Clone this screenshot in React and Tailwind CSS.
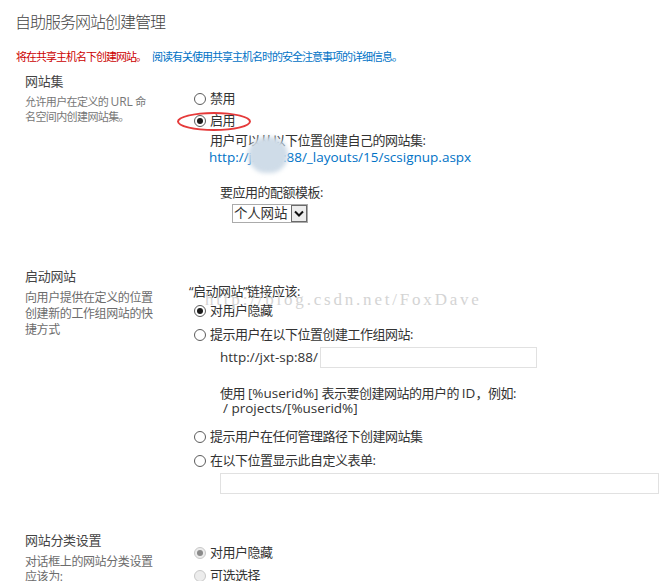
import React from "react";

// 拉丁字母部分用正常字距
const L = ({ children }) => (
  <span className="text-[13.5px] tracking-normal">{children}</span>
);

function Radio({ checked, disabled }) {
  return (
    <span
      className={`flex h-[12px] w-[12px] shrink-0 items-center justify-center rounded-full border ${
        disabled ? "border-[#c8c8c8] bg-[#ececec]" : "border-[#5c5c5c] bg-white"
      }`}
    >
      {checked && (
        <span
          className={`h-[6px] w-[6px] rounded-full ${
            disabled ? "bg-[#8a8a8a]" : "bg-[#1a1a1a]"
          }`}
        />
      )}
    </span>
  );
}

function Option({ checked, disabled, rowClass, children, extra }) {
  return (
    <div
      className={`relative flex items-center gap-[4px] pl-[5px] text-[13px] tracking-[-0.5px] text-[#333] ${rowClass}`}
    >
      <Radio checked={checked} disabled={disabled} />
      <span className="whitespace-nowrap">{children}</span>
      {extra}
    </div>
  );
}

const App = () => {
  return (
    <div className="relative min-h-[581px] w-[669px] overflow-hidden bg-white pt-[12px] font-['Open_Sans','Noto_Sans_CJK_SC',sans-serif]">
      <h1 className="pl-[15px] text-[16px] font-light leading-[20px] tracking-[-1px] text-[#444]">
        自助服务网站创建管理
      </h1>

      <p className="mt-[17px] pl-[16px] text-[11px] leading-[16px] tracking-[-1px]">
        <span className="text-[#c00]">将在共享主机名下创建网站。</span>
        <span className="ml-[6px] text-[#0072c6]">
          阅读有关使用共享主机名时的安全注意事项的详细信息。
        </span>
      </p>

      {/* 网站集 */}
      <div className="mt-[8px] flex">
        <div className="w-[189px] shrink-0 pl-[25px]">
          <h2 className="text-[13px] leading-[16px] tracking-[-0.3px] text-[#444]">
            网站集
          </h2>
          <p className="mt-[5px] text-[11px] leading-[15px] tracking-[-0.6px] text-[#777]">
            允许用户在定义的 <span className="text-[12px] tracking-normal">URL</span> 命
            <br />
            名空间内创建网站集。
          </p>
        </div>
        <div className="relative flex-1 pt-[15px]">
          <Option rowClass="h-[22px]">禁用</Option>
          <Option
            checked
            rowClass="h-[22px]"
            extra={
              <span className="pointer-events-none absolute left-[-12px] top-[2px] h-[19px] w-[74px] rounded-[50%] border-2 border-[#e53a3a]" />
            }
          >
            启用
          </Option>
          <div className="pl-[21px] text-[13px] leading-[16px] tracking-[-0.5px] text-[#333]">
            用户可以从以下位置创建自己的网站集:
          </div>
          <div className="pl-[20px] leading-[16px] text-[#0072c6]">
            <L>http://jxt-sp:88/_layouts/15/scsignup.aspx</L>
          </div>
          <span className="pointer-events-none absolute left-[59px] top-[64px] h-[36px] w-[40px] rounded-full bg-[#cfdce8] blur-[2px]" />
          <div className="mt-[19px] pl-[31px] text-[13px] leading-[16px] tracking-[-0.5px] text-[#333]">
            要应用的配额模板:
          </div>
          <div className="ml-[43px] mt-[4px] flex h-[19px] w-[76px] items-stretch border border-[#ababab] bg-white">
            <span className="flex-1 whitespace-nowrap pl-[1px] text-[13.5px] leading-[17px] tracking-[-0.2px] text-[#333]">
              个人网站
            </span>
            <span className="flex w-[16px] shrink-0 items-center justify-center border border-[#6a6a6a] bg-[#ededed]">
              <svg width="10" height="7" viewBox="0 0 10 7">
                <path
                  d="M1 1.5 L5 5.5 L9 1.5"
                  fill="none"
                  stroke="#111"
                  strokeWidth="2"
                />
              </svg>
            </span>
          </div>
        </div>
      </div>

      {/* 启动网站 */}
      <div className="mt-[45px] flex">
        <div className="w-[189px] shrink-0 pl-[25px]">
          <h2 className="text-[13px] leading-[16px] tracking-[-0.3px] text-[#444]">
            启动网站
          </h2>
          <p className="mt-[6px] text-[12px] leading-[16px] tracking-[-0.4px] text-[#6c6c6c]">
            向用户提供在定义的位置
            <br />
            创建新的工作组网站的快
            <br />
            捷方式
          </p>
        </div>
        <div className="flex-1 pt-[16px]">
          <div className="text-[13px] leading-[15px] tracking-[-0.5px] text-[#333]">
            “启动网站”链接应该:
          </div>
          <Option checked rowClass="h-[24px]">
            对用户隐藏
          </Option>
          <Option rowClass="h-[24px]">提示用户在以下位置创建工作组网站:</Option>
          <div className="flex h-[21px] items-center pl-[31px] text-[#333]">
            <L>http://jxt-sp:88/</L>
            <span className="ml-[2px] h-[21px] w-[217px] border border-[#e1e1e1] bg-white" />
          </div>
          <div className="mt-[18px] pl-[31px] text-[13px] leading-[15px] tracking-[-0.5px] text-[#333]">
            使用 <L>[%userid%]</L> 表示要创建网站的用户的 <L>ID</L>，例如:
            <br />
            <span className="ml-[3px]">
              <L>/ projects/[%userid%]</L>
            </span>
          </div>
          <Option rowClass="mt-[9px] h-[24px]">提示用户在任何管理路径下创建网站集</Option>
          <Option rowClass="h-[24px]">在以下位置显示此自定义表单:</Option>
          <div className="ml-[31px] h-[21px] w-[439px] border border-[#e1e1e1] bg-white" />
        </div>
      </div>

      {/* 网站分类设置 */}
      <div className="mt-[38px] flex">
        <div className="w-[189px] shrink-0 pl-[25px]">
          <h2 className="text-[13px] leading-[16px] tracking-[-0.3px] text-[#444]">
            网站分类设置
          </h2>
          <p className="mt-[6px] text-[12px] leading-[15px] tracking-[-0.4px] text-[#6c6c6c]">
            对话框上的网站分类设置
            <br />
            应该为:
          </p>
        </div>
        <div className="flex-1 pt-[9px]">
          <Option checked disabled rowClass="h-[23px]">
            对用户隐藏
          </Option>
          <Option disabled rowClass="h-[23px]">
            可选选择
          </Option>
        </div>
      </div>

      {/* 水印 */}
      <div className="pointer-events-none absolute left-[205px] top-[290px] whitespace-nowrap font-['Liberation_Serif',serif] text-[17px] leading-[20px] tracking-[2.8px] text-[#d4d4d4]">
        http://blog.csdn.net/FoxDave
      </div>
    </div>
  );
};

export default App;
